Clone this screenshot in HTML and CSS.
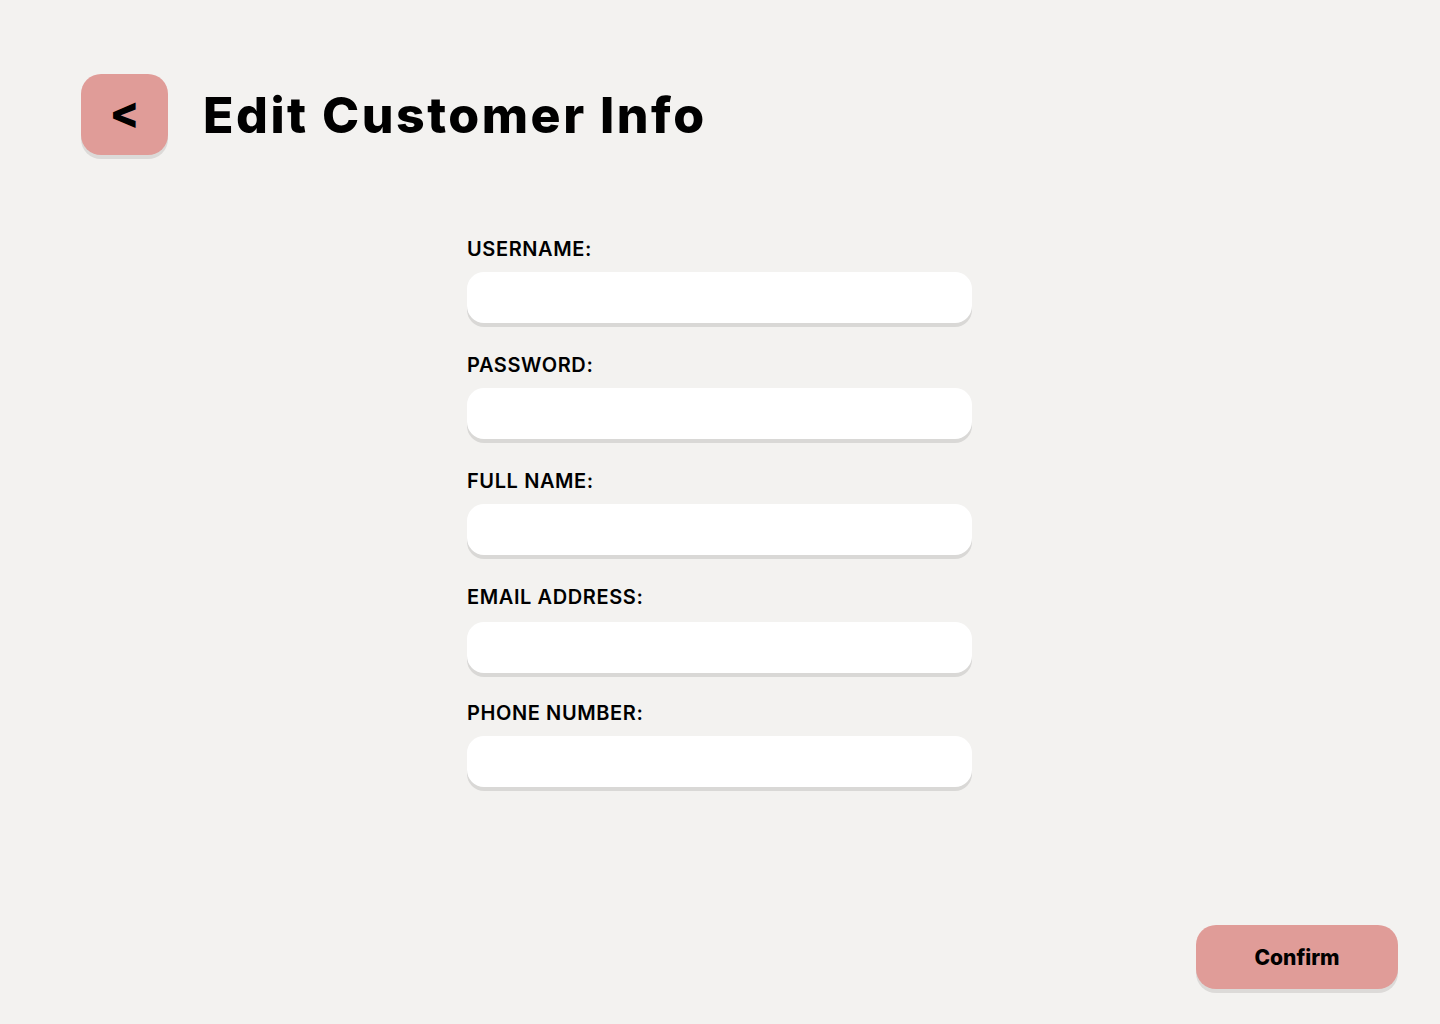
FILE: index.html
```html
<!DOCTYPE html>
<html lang="en">
<head>
<meta charset="utf-8">
<title>Edit Customer Info</title>
<link rel="stylesheet" href="styles.css">
</head>
<body>
<div class="page">
  <header class="header">
    <button class="back-btn" type="button" aria-label="Back">&lt;</button>
    <h1 class="title">Edit Customer Info</h1>
  </header>
  <form class="form">
    <div class="field">
      <label class="label" for="username">USERNAME:</label>
      <input class="input" id="username" type="text">
    </div>
    <div class="field">
      <label class="label" for="password">PASSWORD:</label>
      <input class="input" id="password" type="password">
    </div>
    <div class="field">
      <label class="label" for="fullname">FULL NAME:</label>
      <input class="input" id="fullname" type="text">
    </div>
    <div class="field field-email">
      <label class="label" for="email">EMAIL ADDRESS:</label>
      <input class="input" id="email" type="email">
    </div>
    <div class="field field-phone">
      <label class="label" for="phone">PHONE NUMBER:</label>
      <input class="input" id="phone" type="tel">
    </div>
  </form>
  <footer class="footer">
    <button class="confirm-btn" type="button">Confirm</button>
  </footer>
</div>
</body>
</html>
```

FILE: styles.css
```css
* { box-sizing: border-box; }
html, body {
  margin: 0;
  padding: 0;
  background: #f3f2f0;
  font-family: Inter, "Open Sans", "DejaVu Sans", sans-serif;
  color: #000;
}
.page {
  width: 1440px;
  height: 1024px;
  display: flex;
  flex-direction: column;
}
.header {
  display: flex;
  align-items: center;
  gap: 35px;
  padding: 74px 0 0 81px;
}
.back-btn {
  width: 87px;
  height: 81px;
  border: none;
  border-radius: 20px;
  background: #e09c98;
  box-shadow: 0 4px 0 #dcdad8;
  font-family: Inter, sans-serif;
  font-weight: 800;
  font-size: 44px;
  color: #000;
  padding: 0 0 6px 0;
  line-height: 1;
}
.title {
  margin: 0;
  font-size: 50px;
  font-weight: 800;
  letter-spacing: 2.5px;
}
.form {
  display: flex;
  flex-direction: column;
  gap: 30px;
  width: 505px;
  margin: 82px 0 0 467px;
}
.field {
  display: flex;
  flex-direction: column;
  gap: 11px;
}
.field-email { gap: 13px; }
.field-phone { margin-top: -2px; }
.label {
  font-size: 20px;
  font-weight: 600;
  line-height: 24px;
  letter-spacing: 0.6px;
}
.input {
  width: 505px;
  height: 51px;
  border: none;
  border-radius: 17px;
  background: #fff;
  box-shadow: 0 4px 0 #d9d8d6;
  outline: none;
}
.footer {
  margin-top: auto;
  display: flex;
  justify-content: flex-end;
  padding: 0 42px 35px 0;
}
.confirm-btn {
  width: 202px;
  height: 64px;
  border: none;
  border-radius: 20px;
  background: #e09c98;
  box-shadow: 0 4px 0 #dcdad8;
  font-family: Inter, sans-serif;
  font-size: 21px;
  font-weight: 800;
  color: #000;
}
```
